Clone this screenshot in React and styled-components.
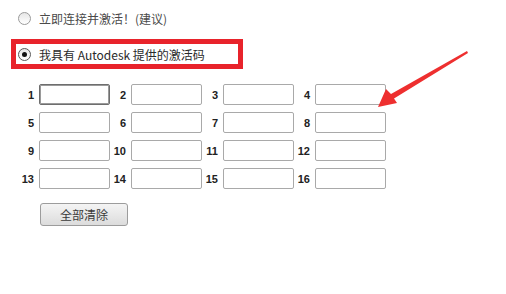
import React from 'react';
import styled, { createGlobalStyle } from 'styled-components';

const GlobalStyle = createGlobalStyle`
  html, body {
    margin: 0;
    padding: 0;
    background: #ffffff;
  }
  body {
    font-family: 'Noto Sans CJK SC', 'Liberation Sans', sans-serif;
  }
`;

const Page = styled.div`
  position: relative;
  width: 506px;
  height: 294px;
  overflow: hidden;
  padding-top: 7px;
  box-sizing: border-box;
`;

const Option = styled.label`
  display: flex;
  align-items: center;
  gap: 8px;
  height: 22px;
  padding-left: ${p => p.$inset}px;
  font-size: 12px;
  color: ${p => (p.$checked ? '#2a2a2a' : '#4a4a4a')};
  white-space: nowrap;
`;

const Radio = styled.span`
  position: relative;
  width: 11px;
  height: 11px;
  border-radius: 50%;
  border: 1px solid ${p => (p.$checked ? '#5a5a5a' : '#9a9a9a')};
  background: linear-gradient(#e6e6e6, #ffffff);
  flex-shrink: 0;

  &::after {
    content: '';
    display: ${p => (p.$checked ? 'block' : 'none')};
    position: absolute;
    left: 3px;
    top: 3px;
    width: 5px;
    height: 5px;
    border-radius: 50%;
    background: #111;
  }
`;

const Highlight = styled.div`
  margin: 10px 0 0 11px;
  width: 232px;
  height: 30px;
  box-sizing: border-box;
  border: 5px solid #e8232b;
  display: flex;
  align-items: center;
`;

const CodeGrid = styled.div`
  margin: 15px 0 0 18px;
  display: grid;
  grid-template-columns: repeat(4, 21px 71px);
  row-gap: 7px;
  width: max-content;
`;

const Num = styled.span`
  font-family: 'Liberation Sans', Arial, sans-serif;
  font-weight: bold;
  font-size: 11px;
  color: #222;
  display: flex;
  align-items: center;
  justify-content: flex-end;
  padding-right: 5px;
`;

const CodeInput = styled.input`
  width: 71px;
  height: 21px;
  box-sizing: border-box;
  border: 1px solid ${p => (p.$active ? '#6e6e6e' : '#a9a9a9')};
  border-radius: 2px;
  background: #fff;
  padding: 0 3px;
  outline: none;
  box-shadow: ${p => (p.$active ? 'inset 0 0 0 1px #9a9a9a' : 'none')};
`;

const ClearButton = styled.button`
  margin: 14px 0 0 40px;
  width: 88px;
  height: 23px;
  border: 1px solid #9c9c9c;
  border-radius: 3px;
  background: linear-gradient(#f4f4f4, #dcdcdc);
  font-family: 'Noto Sans CJK SC', sans-serif;
  font-size: 12px;
  color: #3a3a3a;
  padding: 0;
`;

const Arrow = styled.svg`
  position: absolute;
  left: 0;
  top: 0;
  pointer-events: none;
`;

const fields = Array.from({ length: 16 }, (_, i) => i + 1);

export default function App() {
  return (
    <Page>
      <GlobalStyle />
      <Option $inset={18}>
        <Radio />
        立即连接并激活！(建议)
      </Option>
      <Highlight>
        <Option $inset={2} $checked>
          <Radio $checked />
          我具有 Autodesk 提供的激活码
        </Option>
      </Highlight>
      <CodeGrid>
        {fields.map(n => (
          <React.Fragment key={n}>
            <Num>{n}</Num>
            <CodeInput $active={n === 1} />
          </React.Fragment>
        ))}
      </CodeGrid>
      <ClearButton>全部清除</ClearButton>
      <Arrow width="506" height="294" viewBox="0 0 506 294">
        <path
          d="M467 51 L391 94 L386 89 L378 107 L397 103 L394 98.5 L468 53 Z"
          fill="#ee2f2f"
        />
      </Arrow>
    </Page>
  );
}
